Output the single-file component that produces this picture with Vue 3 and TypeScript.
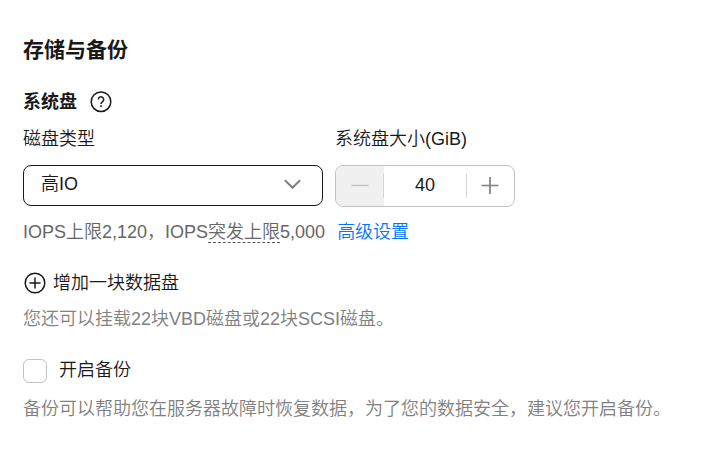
<script setup lang="ts">
import { ref } from 'vue'

const diskType = ref('高IO')
const diskSize = ref(40)
const backup = ref(false)
</script>

<template>
  <main class="panel">
    <h2 class="title">存储与备份</h2>
    <div class="subtitle">
      <span>系统盘</span>
      <svg class="help" viewBox="0 0 22 22" width="22" height="22" fill="none" stroke="#191919" stroke-width="1.5">
        <circle cx="11" cy="10.7" r="9.8" />
        <path d="M8.300 8.500a2.700 2.700 0 1 1 4.300 2.200c-1 .8-1.600 1.100-1.600 2.200" />
        <path d="M11 14.200v1.700" />
      </svg>
    </div>
    <div class="fields">
      <div class="field type">
        <label class="label">磁盘类型</label>
        <div class="select">
          <span>{{ diskType }}</span>
          <svg viewBox="0 0 18 12" width="18" height="12" fill="none" stroke="#808080" stroke-width="2" stroke-linecap="round" stroke-linejoin="round"><path d="M2.500 2.700l7 7 7-7" /></svg>
        </div>
      </div>
      <div class="field">
        <label class="label">系统盘大小(GiB)</label>
        <div class="stepper">
          <button class="step off"><svg viewBox="0 0 18 18" width="18" height="18" stroke="#c2c2c2" stroke-width="1.5"><path d="M.5 8.500h17" /></svg></button>
          <span class="value">{{ diskSize }}</span>
          <button class="step"><svg viewBox="0 0 18 18" width="18" height="18" stroke="#808080" stroke-width="1.7"><path d="M.5 8.500h17M9 0v17" /></svg></button>
        </div>
      </div>
    </div>
    <p class="iops">IOPS上限2,120，IOPS<span class="burst">突发上限</span>5,000<a class="link">高级设置</a></p>
    <div class="add">
      <svg viewBox="0 0 22 22" width="22" height="22" fill="none" stroke="#191919" stroke-width="1.5"><circle cx="11" cy="11" r="9.8" /><path d="M5.500 11h11M11 5.500v11" /></svg>
      <span>增加一块数据盘</span>
    </div>
    <p class="hint">您还可以挂载22块VBD磁盘或22块SCSI磁盘。</p>
    <label class="backup"><input v-model="backup" type="checkbox" class="check" /><span>开启备份</span></label>
    <p class="hint last">备份可以帮助您在服务器故障时恢复数据，为了您的数据安全，建议您开启备份。</p>
  </main>
</template>

<style>
body { background: #fff; }
</style>
<style scoped>
.panel { box-sizing: border-box; height: 455px; padding: 34px 23px 0; color: #191919; font: 350 18px/26px "Liberation Sans", "Noto Sans CJK SC", sans-serif; white-space: nowrap; overflow: hidden; }
.title { margin: 0; font-size: 21px; line-height: 32px; font-weight: 700; }
.subtitle { display: flex; align-items: center; gap: 13px; height: 26px; margin-top: 23px; font-weight: 700; }
svg { display: block; flex: none; }
.fields { display: flex; gap: 12px; margin-top: 11px; }
.label { display: block; height: 39px; }
.select { box-sizing: border-box; width: 300px; height: 41px; display: flex; align-items: center; justify-content: space-between; padding: 0 21px 3px 17px; border: 1px solid #191919; border-radius: 8px; }
.stepper { box-sizing: border-box; width: 180px; height: 42px; display: flex; align-items: center; border: 1px solid #c2c2c2; border-radius: 8px; overflow: hidden; }
.step { display: flex; flex: none; align-items: center; justify-content: center; width: 48px; height: 40px; border: 0; padding: 0; background: transparent; }
.off { background: #f0f0f0; }
.value { box-sizing: border-box; flex: 1; height: 24px; margin: 0 -1px; text-align: center; line-height: 22px; border-left: 1px solid #d6d6d6; border-right: 1px solid #d6d6d6; }
.iops { margin: 12px 0 0; color: #666; }
.burst { border-bottom: 1px dashed #595959; }
.link { margin-left: 12px; color: #0077ff; }
.add { display: flex; align-items: center; gap: 7px; height: 26px; margin: 25px 0 0 1px; }
.hint { margin: 10px 0 0; color: #808080; }
.backup { display: flex; align-items: center; gap: 12px; height: 26px; margin-top: 25px; }
.check { appearance: none; box-sizing: border-box; width: 24px; height: 24px; margin: 2px 0 0; border: 1px solid #c2c2c2; border-radius: 6px; }
.last { margin-top: 13px; }
</style>
